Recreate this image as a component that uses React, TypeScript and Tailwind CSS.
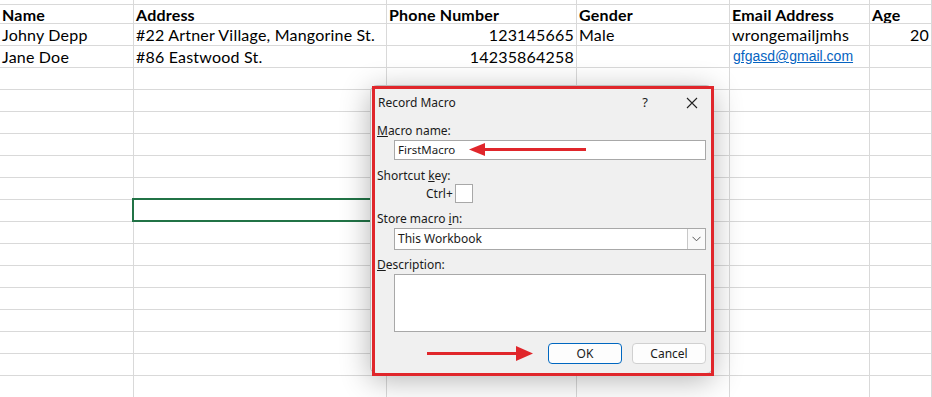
import React from 'react'

const cols = [134, 253, 190, 153, 140, 62]

const header = ['Name', 'Address', 'Phone Number', 'Gender', 'Email Address', 'Age']

type Cell = { text: string; right?: boolean; link?: boolean }

const data: Cell[][] = [
  [
    { text: 'Johny Depp' },
    { text: '#22 Artner Village, Mangorine St.' },
    { text: '123145665', right: true },
    { text: 'Male' },
    { text: 'wrongemailjmhs' },
    { text: '20', right: true },
  ],
  [
    { text: 'Jane Doe' },
    { text: '#86 Eastwood St.' },
    { text: '14235864258', right: true },
    { text: '' },
    { text: 'gfgasd@gmail.com', link: true },
    { text: '' },
  ],
]

const sheetFont = { fontFamily: '"Lato", "Noto Sans", sans-serif' }
const uiFont = { fontFamily: '"Noto Sans", "Open Sans", sans-serif' }

function Row({ h, cells }: { h: string; cells?: React.ReactNode[] }) {
  return (
    <div className={`flex border-b border-[#d9d9d9] ${h}`}>
      {cols.map((w, i) => (
        <div
          key={i}
          className="shrink-0 border-r border-[#d9d9d9] overflow-hidden whitespace-nowrap"
          style={{ width: w }}
        >
          {cells ? cells[i] : null}
        </div>
      ))}
    </div>
  )
}

function Label({ children }: { children: React.ReactNode }) {
  return <div className="text-[12px] leading-[16px] text-[#1a1a1a]">{children}</div>
}

function Dialog() {
  return (
    <div
      className="absolute left-[370px] top-[85px] w-[343px] h-[289px] rounded-[7px] bg-[#f0f0f0] border border-[#bdbdbd] shadow-[0_6px_30px_rgba(0,0,0,0.3)]"
      style={uiFont}
    >
      <div className="flex items-center h-[33px] pl-[7px] pr-[14px] text-[12px] text-[#1a1a1a]">
        <span className="flex-1">Record Macro</span>
        <span className="mr-[38px] text-[13px]">?</span>
        <svg width="12" height="12" viewBox="0 0 12 12">
          <path d="M1 1 L11 11 M11 1 L1 11" stroke="#222" strokeWidth="1.1" />
        </svg>
      </div>
      <div className="pl-[6px] pr-[6px]">
        <div className="mt-[4px]">
          <Label>
            <span className="underline">M</span>acro name:
          </Label>
        </div>
        <div className="ml-[17px] mt-[1px] h-[20px] bg-white border border-[#a8a8a8] flex items-center pl-[3px] text-[11.5px] text-[#1a1a1a]">
          FirstMacro
        </div>
        <div className="mt-[8px]">
          <Label>
            Shortcut <span className="underline">k</span>ey:
          </Label>
        </div>
        <div className="flex items-center h-[19px] pl-[49px]">
          <span className="text-[12px] text-[#1a1a1a] mr-[2px]">Ctrl+</span>
          <div className="w-[18px] h-[19px] bg-white border border-[#a8a8a8]" />
        </div>
        <div className="mt-[8px]">
          <Label>
            Store macro <span className="underline">i</span>n:
          </Label>
        </div>
        <div className="ml-[17px] mt-[1px] h-[22px] bg-white border border-[#a8a8a8] flex items-center text-[12px] text-[#1a1a1a]">
          <span className="flex-1 pl-[3px]">This Workbook</span>
          <div className="w-[18px] h-full border-l border-[#c8c8c8] bg-[#fafafa] flex items-center justify-center">
            <svg width="9" height="6" viewBox="0 0 9 6">
              <path d="M0.5 0.8 L4.5 4.8 L8.5 0.8" stroke="#555" strokeWidth="1" fill="none" />
            </svg>
          </div>
        </div>
        <div className="mt-[7px]">
          <Label>
            <span className="underline">D</span>escription:
          </Label>
        </div>
        <div className="ml-[17px] mt-[1px] h-[58px] bg-white border border-[#a8a8a8]" />
        <div className="flex justify-end gap-[10px] mt-[11px]">
          <button className="w-[74px] h-[21px] rounded-[4px] border border-[#0067c0] bg-[#fdfdfd] text-[12px] text-[#1a1a1a]">
            OK
          </button>
          <button className="w-[74px] h-[21px] rounded-[4px] border border-[#d0d0d0] bg-[#fdfdfd] text-[12px] text-[#1a1a1a]">
            Cancel
          </button>
        </div>
      </div>
    </div>
  )
}

function Annotations() {
  return (
    <>
      <div className="absolute left-[372px] top-[86px] w-[342px] h-[290px] border-[3px] border-[#e0262b]" />
      <svg className="absolute left-0 top-0" width="932" height="397">
        <line x1="586" y1="149.5" x2="482" y2="149.5" stroke="#e0262b" strokeWidth="3" />
        <polygon points="469,149.5 485,143 485,156" fill="#e0262b" />
        <line x1="427" y1="353.5" x2="518" y2="353.5" stroke="#e0262b" strokeWidth="3" />
        <polygon points="533,353.5 516,346 516,361" fill="#e0262b" />
      </svg>
    </>
  )
}

export default function App() {
  const headerCells = header.map((h) => (
    <div key={h} className="pl-[2px] text-[16px] leading-[19px] font-bold tracking-[0.2px] text-black">
      {h}
    </div>
  ))
  const rows = data.map((r) =>
    r.map((c, i) =>
      c.link ? (
        <div
          key={i}
          className="pl-[3px] text-[14px] leading-[21px] text-[#0563c1] underline"
          style={{ fontFamily: '"Liberation Sans", Arial, sans-serif' }}
        >
          {c.text}
        </div>
      ) : (
        <div
          key={i}
          className={`px-[2px] text-[16px] leading-[21px] tracking-[0.2px] text-black ${c.right ? 'text-right' : ''}`}
        >
          {c.text}
        </div>
      ),
    ),
  )
  const emptyRows = Array.from({ length: 16 })
  return (
    <div className="relative w-[932px] h-[397px] overflow-hidden bg-white" style={sheetFont}>
      <Row h="h-[5px]" />
      <Row h="h-[19px]" cells={headerCells} />
      {rows.map((r, i) => (
        <Row key={i} h="h-[22px]" cells={r} />
      ))}
      {emptyRows.map((_, i) => (
        <Row key={i} h="h-[22px]" />
      ))}
      <div className="absolute left-[132px] top-[198px] w-[260px] h-[24px] border-2 border-[#217346]" />
      <Dialog />
      <Annotations />
    </div>
  )
}
